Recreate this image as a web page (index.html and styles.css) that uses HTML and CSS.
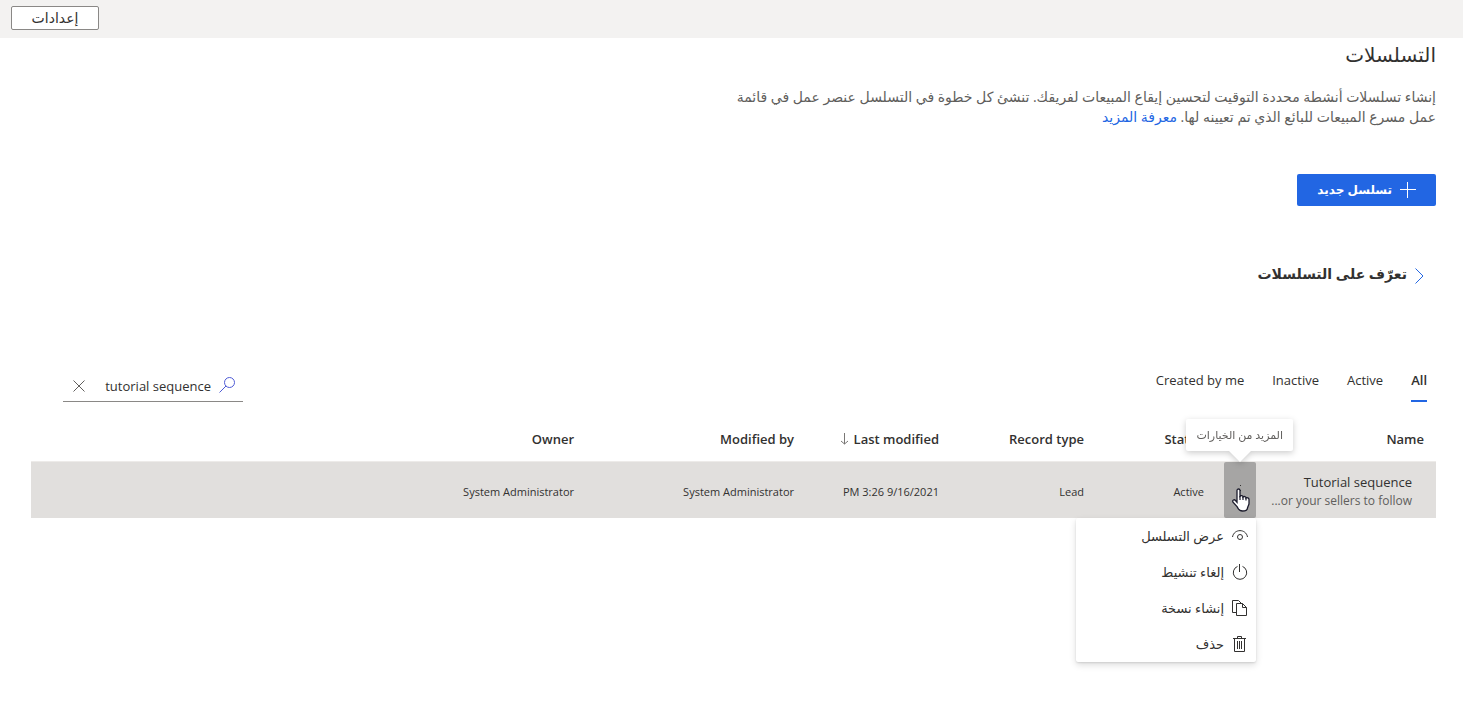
FILE: index.html
```html
<!DOCTYPE html>
<html lang="ar" dir="rtl">
<head>
<meta charset="utf-8">
<meta name="viewport" content="width=device-width, initial-scale=1">
<title>التسلسلات</title>
<link rel="stylesheet" href="styles.css">
</head>
<body>
<header class="topbar"><button class="settings" type="button">إعدادات</button></header>
<main class="page">
  <h1 class="title">التسلسلات</h1>
  <p class="intro">إنشاء تسلسلات أنشطة محددة التوقيت لتحسين إيقاع المبيعات لفريقك. تنشئ كل خطوة في التسلسل عنصر عمل في قائمة<br>عمل مسرع المبيعات للبائع الذي تم تعيينه لها. <a class="link" href="#">معرفة المزيد</a></p>
  <button class="primary" type="button">
    <svg width="16" height="16" viewBox="0 0 16 16" aria-hidden="true"><path d="M7.500 0v16M0 7.500h16" fill="none" stroke="currentColor"/></svg>
    <span>تسلسل جديد</span>
  </button>
  <button class="learn" type="button" aria-expanded="false">
    <svg class="chevron" width="9" height="16" viewBox="0 0 9 16" aria-hidden="true"><path d="M.5.500 8 8 .5 15.500" fill="none" stroke="currentColor"/></svg>
    <span>تعرّف على التسلسلات</span>
  </button>
  <div class="toolbar">
    <nav class="tabs">
      <button class="tab tab-current" type="button">All</button>
      <button class="tab" type="button">Active</button>
      <button class="tab" type="button">Inactive</button>
      <button class="tab" type="button">Created by me</button>
    </nav>
    <div class="search">
      <svg class="search-icon" width="16" height="16" viewBox="0 0 16 16" aria-hidden="true"><g fill="none" stroke="currentColor"><circle cx="10.500" cy="5.500" r="5"/><path d="M7 9 .5 15.500"/></g></svg>
      <input class="search-input" type="text" dir="ltr" aria-label="Search" value="tutorial sequence">
      <button class="clear" type="button" aria-label="Clear"><svg width="12" height="12" viewBox="0 0 12 12" aria-hidden="true"><path d="m.5.500 11 11m0-11-11 11" fill="none" stroke="currentColor"/></svg></button>
    </div>
  </div>
  <table class="grid">
    <colgroup><col class="col-name"><col class="col-more"><col class="col-status"><col class="col-type"><col class="col-date"><col class="col-modifier"><col></colgroup>
    <thead>
      <tr><th class="name-head">Name</th><th></th><th>Status</th><th>Record type</th><th><span class="sorted">Last modified <svg width="8" height="12" viewBox="0 0 8 12" aria-hidden="true"><path d="M4.500 0v11M1 8l3.500 3L8 8" fill="none" stroke="currentColor"/></svg></span></th><th>Modified by</th><th>Owner</th></tr>
    </thead>
    <tbody>
      <tr>
        <td class="name-cell"><div class="name">Tutorial sequence</div><div class="detail">or your sellers to follow...</div></td>
        <td class="more-cell">
          <div class="more-wrap">
            <button class="more" type="button" aria-label="المزيد من الخيارات" aria-haspopup="menu"><svg width="4" height="14" viewBox="0 0 4 14" aria-hidden="true"><path d="M2 2h1v1H2zM2 7h1v1H2zM2 12h1v1H2z" fill="currentColor"/></svg></button>
            <div class="tooltip" role="tooltip">المزيد من الخيارات</div>
            <div class="menu" role="menu">
              <button class="item" type="button" role="menuitem"><svg width="16" height="16" viewBox="0 0 16 16" aria-hidden="true"><g fill="none" stroke="currentColor"><path d="M.5 9C2 .5 14 .5 15.500 9"/><circle cx="8" cy="9" r="2.500"/></g></svg><span>عرض التسلسل</span></button>
              <button class="item" type="button" role="menuitem"><svg width="16" height="16" viewBox="0 0 16 16" aria-hidden="true"><path d="M7.500 0v8M5.500 2.400a6.700 6.700 0 1 0 5 0" fill="none" stroke="currentColor"/></svg><span>إلغاء تنشيط</span></button>
              <button class="item" type="button" role="menuitem"><svg width="16" height="16" viewBox="0 0 16 16" aria-hidden="true"><path d="M4.500 12.500h-4V.5h6l3 3M4.500 3.500h6l4 4v8h-10zM10.500 3.500v4h4" fill="none" stroke="currentColor"/></svg><span>إنشاء نسخة</span></button>
              <button class="item" type="button" role="menuitem"><svg width="16" height="16" viewBox="0 0 16 16" aria-hidden="true"><path d="M1 2.500h13M5.500 2.500v-2h4v2M2.500 2.500v13h10v-13M5.500 5v8M7.500 5v8M9.500 5v8" fill="none" stroke="currentColor"/></svg><span>حذف</span></button>
            </div>
            <svg class="cursor" width="18" height="24" viewBox="0 0 18 24" aria-hidden="true"><path d="M5 2.500C5 .5 8 .5 8 2.500V8.200c1-1 3-.5 3 .8 1-1 3-.4 3 .9 1-.7 3-.1 3 1.500v4.100c0 1.500-1 2.500-1.500 4.500 0 2-2 3-5 3-3.500 0-4.500-2-5.500-4.500L1 14.200c-1-2 1.200-3.200 2.500-1.700L5 14.300z" fill="#fff" stroke="#1b1b2c" stroke-width="1.300"/><path d="M8 8v4M11 9v3M14 10v2.500" fill="none" stroke="#1b1b2c" stroke-width="1.200"/></svg>
          </div>
        </td>
        <td>Active</td><td>Lead</td><td>9/16/2021 3:26 PM</td><td>System Administrator</td><td>System Administrator</td>
      </tr>
    </tbody>
  </table>
</main>
</body>
</html>
```
FILE: styles.css
```css
* { box-sizing: border-box; }
body { margin: 0; min-height: 100vh; background: #fff; color: #323130; font: 13px/20px "Open Sans", "DejaVu Sans", sans-serif; }
button, input { font: inherit; color: inherit; }
button { padding: 0; border: 0; background: none; cursor: pointer; white-space: nowrap; }
svg { flex: none; }
.topbar { display: flex; justify-content: flex-end; align-items: center; height: 38px; padding: 0 11px 2px; background: #f3f2f1; }
.settings { width: 88px; height: 24px; background: #fff; border: 1px solid #8a8886; border-radius: 2px; font-size: 14px; }
.page { display: flex; flex-direction: column; align-items: flex-start; min-height: calc(100vh - 38px); padding: 0 27px 0 31px; }
.title { margin: 3px 0 0; font-size: 20px; line-height: 28px; font-weight: 400; }
.intro { margin: 18px 0 0; font-size: 14px; color: #605e5c; }
.link { color: #2266e3; text-decoration: none; }
.primary { display: flex; align-items: center; gap: 8px; height: 32px; margin-top: 47px; padding: 0 20px; color: #fff; background: #2266e3; border-radius: 2px; font-size: 12px; font-weight: 600; }
.learn { display: flex; align-items: center; gap: 8px; margin: 56px 12px 0 0; font-size: 14px; line-height: 24px; font-weight: 600; }
.chevron { color: #2266e3; margin-top: 3px; }
.toolbar { display: flex; justify-content: space-between; align-self: stretch; margin-top: 72px; padding: 0 9px 0 32px; height: 44px; }
.tabs { display: flex; gap: 28px; }
.tab { height: 44px; padding-top: 2px; border-bottom: 2px solid transparent; }
.tab-current { font-weight: 600; border-color: #2266e3; }
.search { display: flex; align-items: center; width: 180px; height: 32px; margin-top: 12px; padding: 0 8px 0 10px; border-bottom: 1px solid #8a8886; }
.search-icon { color: #4f5bd5; margin-bottom: 2px; }
.search-input { flex: 1; min-width: 0; padding: 0 8px; border: 0; outline: 0; background: none; text-align: right; }
.clear { display: flex; color: #605e5c; }
.grid { align-self: stretch; margin-top: 16px; table-layout: fixed; border-collapse: separate; border-spacing: 0; }
.col-name { width: 180px; }
.col-more { width: 32px; }
.col-status { width: 120px; }
.col-type, .col-date { width: 145px; }
.col-modifier { width: 220px; }
th, td { padding: 0 20px 0 0; text-align: right; white-space: nowrap; }
th { height: 44px; padding-bottom: 2px; font-weight: 600; border-bottom: 1px solid #edebe9; }
td { height: 56px; padding-top: 4px; font-size: 11px; background: #e1dfdd; }
.name-head { padding-right: 12px; }
.sorted { display: flex; align-items: center; gap: 6px; }
.sorted svg { color: #797775; }
.name-cell { padding-right: 24px; padding-top: 2px; }
.name { font-size: 13px; line-height: 20px; }
.detail { font-size: 12px; line-height: 18px; color: #605e5c; }
.more-cell { padding: 0; }
.more-wrap { position: relative; }
.more { display: flex; justify-content: center; align-items: center; width: 32px; height: 56px; background: #a6a5a4; border-radius: 2px; }
.tooltip { position: absolute; right: -37px; bottom: 67px; padding: 6px 10px; background: #fff; color: #605e5c; font-size: 11px; border-radius: 2px; filter: drop-shadow(0 2px 3px #0003); }
.tooltip::after { content: ""; position: absolute; top: 100%; left: calc(50% - 11px); border: 11px solid transparent; border-top-color: #fff; border-bottom: 0; }
.menu { position: absolute; top: 56px; right: 0; z-index: 1; width: 180px; background: #fff; font-size: 13px; border-radius: 2px; box-shadow: 0 3px 7px #00000022, 0 1px 2px #0000001c; }
.item { display: flex; align-items: center; gap: 8px; width: 100%; height: 36px; padding: 0 8px; }
.cursor { position: absolute; left: 8px; top: 26px; z-index: 2; }
```
